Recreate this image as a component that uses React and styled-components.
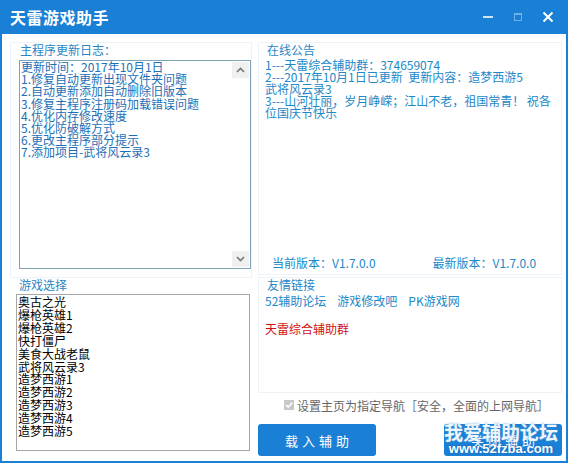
import React from 'react';
import styled, { createGlobalStyle } from 'styled-components';

const GlobalStyle = createGlobalStyle`
  html, body {
    margin: 0;
    padding: 0;
    background: #fff;
  }
  body {
    font-family: "Noto Sans CJK SC", "DejaVu Sans", sans-serif;
    font-size: 12px;
  }
`;

const logLines = [
  '更新时间：2017年10月1日',
  '1.修复自动更新出现文件夹问题',
  '2.自动更新添加自动删除旧版本',
  '3.修复主程序注册码加载错误问题',
  '4.优化内存修改速度',
  '5.优化防破解方式',
  '6.更改主程序部分提示',
  '7.添加项目-武将风云录3',
];

const games = [
  '奥古之光', '爆枪英雄1', '爆枪英雄2', '快打僵尸', '美食大战老鼠', '武将风云录3',
  '造梦西游1', '造梦西游2', '造梦西游3', '造梦西游4', '造梦西游5',
];

const notices = [
  '1---天雷综合辅助群：374659074',
  '2---2017年10月1日已更新  更新内容：造梦西游5',
  '武将风云录3',
  '3---山河壮丽，岁月峥嵘；江山不老，祖国常青！ 祝各位国庆节快乐',
];

function App() {
  return (
    <>
      <GlobalStyle />
      <Window>
        <TitleBar>
          <Title>天雷游戏助手</Title>
          <Controls>
            <CtrlBtn aria-label="minimize">
              <svg width="12" height="12" viewBox="0 0 12 12">
                <rect x="1" y="5" width="10" height="2" fill="#cfe3f5" />
              </svg>
            </CtrlBtn>
            <CtrlBtn aria-label="maximize">
              <svg width="12" height="12" viewBox="0 0 12 12">
                <rect x="2.5" y="2.5" width="7" height="7" fill="none" stroke="#6fb0e6" strokeWidth="1" />
                <rect x="2.5" y="2.5" width="7" height="1.5" fill="#6fb0e6" />
              </svg>
            </CtrlBtn>
            <CtrlBtn aria-label="close">
              <svg width="12" height="12" viewBox="0 0 12 12">
                <path d="M1.5 1.5 L10.5 10.5 M10.5 1.5 L1.5 10.5" stroke="#fff" strokeWidth="2" />
              </svg>
            </CtrlBtn>
          </Controls>
        </TitleBar>
        <Body>
          <Column>
            <Group $h={236}>
              <GroupLabel>主程序更新日志：</GroupLabel>
              <LogBox>
                <LogText>
                  {logLines.map((l) => (
                    <div key={l}>{l}</div>
                  ))}
                </LogText>
                <ScrollTrack>
                  <ScrollArrow>
                    <svg width="9" height="6" viewBox="0 0 9 6">
                      <path d="M1 5 L4.5 1.5 L8 5" fill="none" stroke="#777" strokeWidth="1.6" />
                    </svg>
                  </ScrollArrow>
                  <ScrollArrow>
                    <svg width="9" height="6" viewBox="0 0 9 6">
                      <path d="M1 1 L4.5 4.5 L8 1" fill="none" stroke="#777" strokeWidth="1.6" />
                    </svg>
                  </ScrollArrow>
                </ScrollTrack>
              </LogBox>
            </Group>
            <Plain>
              <GroupLabel>游戏选择</GroupLabel>
              <ListBox>
                {games.map((g) => (
                  <ListItem key={g}>{g}</ListItem>
                ))}
              </ListBox>
            </Plain>
          </Column>
          <Column>
            <Group $h={233}>
              <GroupLabel $right>在线公告</GroupLabel>
              <Notice>
                {notices.map((n) => (
                  <div key={n}>{n}</div>
                ))}
              </Notice>
              <Versions>
                <span>当前版本：V1.7.0.0</span>
                <span>最新版本：V1.7.0.0</span>
              </Versions>
            </Group>
            <Group $h={116} $top={2}>
              <GroupLabel $right>友情链接</GroupLabel>
              <Links>
                <LinkText>52辅助论坛</LinkText>
                <LinkText>游戏修改吧</LinkText>
                <LinkText>PK游戏网</LinkText>
              </Links>
              <RedLink>天雷综合辅助群</RedLink>
            </Group>
            <CheckRow>
              <Check>
                <svg width="10" height="10" viewBox="0 0 10 10">
                  <path d="M2 5 L4.2 7.2 L8.2 2.6" fill="none" stroke="#fff" strokeWidth="1.6" />
                </svg>
              </Check>
              <span>设置主页为指定导航［安全，全面的上网导航］</span>
            </CheckRow>
            <ButtonRow>
              <ActionButton>载入辅助</ActionButton>
              <ActionButton>关闭辅助</ActionButton>
            </ButtonRow>
          </Column>
        </Body>
        <Watermark>
          <WmBig>我爱辅助论坛</WmBig>
          <WmSmall>www.52fzba.com</WmSmall>
        </Watermark>
      </Window>
    </>
  );
}

export default App;

const Window = styled.div`
  position: relative;
  width: 568px;
  height: 463px;
  box-sizing: border-box;
  display: flex;
  flex-direction: column;
  background: #fff;
  border: 2px solid #1a80d6;
  border-top: none;
  overflow: hidden;
`;

const TitleBar = styled.div`
  height: 34px;
  margin: 0 -2px;
  background: #1a80d6;
  display: flex;
  align-items: center;
  justify-content: space-between;
  padding: 0 10px;
`;

const Title = styled.div`
  color: #fff;
  font-size: 16px;
  font-weight: bold;
  letter-spacing: 0.5px;
`;

const Controls = styled.div`
  display: flex;
  align-items: center;
  gap: 18px;
  padding-right: 4px;
`;

const CtrlBtn = styled.div`
  width: 12px;
  height: 12px;
  display: flex;
  align-items: center;
  justify-content: center;
`;

const Body = styled.div`
  flex: 1;
  display: grid;
  grid-template-columns: 242px 304px;
  column-gap: 6px;
  padding: 8px 0 0 8px;
`;

const Column = styled.div`
  display: flex;
  flex-direction: column;
`;

const Group = styled.div`
  height: ${(p) => p.$h}px;
  margin-top: ${(p) => p.$top || 0}px;
  box-sizing: border-box;
  border: 1px solid #eef3f7;
  display: flex;
  flex-direction: column;
  padding: 0 0 0 6px;
`;

const Plain = styled.div`
  display: flex;
  flex-direction: column;
  padding: 0 0 0 6px;
`;

const GroupLabel = styled.div`
  color: #2a86c3;
  font-size: 12px;
  line-height: 14px;
  height: 14px;
  padding-left: ${(p) => (p.$right ? 2 : 3)}px;
`;

const LogBox = styled.div`
  width: 232px;
  height: 209px;
  box-sizing: border-box;
  margin-top: 3px;
  margin-left: 2px;
  border: 1px solid #7fa4b5;
  display: flex;
`;

const LogText = styled.div`
  flex: 1;
  color: #1d70b6;
  font-size: 12px;
  line-height: 12.2px;
  padding: 0 0 0 1px;
  white-space: nowrap;
`;

const ScrollTrack = styled.div`
  width: 17px;
  display: flex;
  flex-direction: column;
  justify-content: space-between;
  padding: 1px 1px 1px 0;
`;

const ScrollArrow = styled.div`
  height: 16px;
  background: #f0f0f0;
  display: flex;
  align-items: center;
  justify-content: center;
`;

const ListBox = styled.div`
  width: 234px;
  height: 157px;
  box-sizing: border-box;
  margin-top: 2px;
  border: 1px solid #a6a6a6;
  padding: 1px 0 0 1px;
  color: #000;
  font-size: 12px;
  line-height: 12.9px;
`;

const ListItem = styled.div`
  white-space: nowrap;
`;

const Notice = styled.div`
  color: #2188c9;
  font-size: 12px;
  line-height: 12px;
  padding: 2px 8px 0 0;
  white-space: pre-wrap;
  flex: 1;
`;

const Versions = styled.div`
  display: flex;
  gap: 57px;
  color: #2188c9;
  font-size: 12px;
  line-height: 14px;
  padding: 0 0 4px 7px;
`;

const Links = styled.div`
  display: flex;
  gap: 11px;
  margin-top: 2px;
  color: #2188c9;
  line-height: 14px;
`;

const LinkText = styled.span`
  font-size: 12px;
`;

const RedLink = styled.div`
  color: #d01010;
  font-size: 12px;
  line-height: 14px;
  margin-top: 14px;
`;

const CheckRow = styled.div`
  display: flex;
  align-items: center;
  gap: 3px;
  color: #666;
  font-size: 12px;
  margin-top: 5px;
  padding-left: 26px;
  height: 14px;
`;

const Check = styled.div`
  width: 10px;
  height: 10px;
  background: #c8c8c8;
  display: flex;
  align-items: center;
  justify-content: center;
`;

const ButtonRow = styled.div`
  display: flex;
  justify-content: space-between;
  margin-top: 12px;
`;

const ActionButton = styled.button`
  width: 118px;
  height: 32px;
  border: none;
  border-radius: 3px;
  background: #1a80d6;
  color: #fff;
  font-family: "Noto Sans CJK SC", sans-serif;
  font-size: 13px;
  letter-spacing: 4px;
  padding: 0 0 0 4px;
`;

const Watermark = styled.div`
  position: absolute;
  right: 6px;
  bottom: 5px;
  width: 118px;
  display: flex;
  flex-direction: column;
  align-items: center;
  pointer-events: none;
`;

const WmBig = styled.div`
  color: rgba(255, 255, 255, 0.92);
  font-size: 19px;
  font-weight: bold;
  line-height: 20px;
  text-shadow: 0 0 2px #5aa0dd;
`;

const WmSmall = styled.div`
  color: #fff;
  font-family: "Liberation Sans", sans-serif;
  font-size: 13px;
  font-weight: bold;
  line-height: 14px;
  text-shadow: 0 0 2px #1a5fa8;
`;
